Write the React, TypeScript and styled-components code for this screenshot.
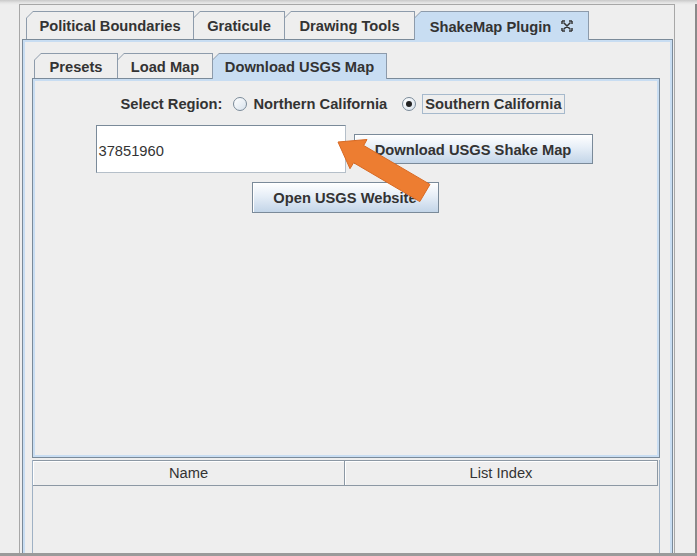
import React from "react";
import styled, { createGlobalStyle } from "styled-components";

const GlobalStyle = createGlobalStyle`
  html, body {
    margin: 0;
    padding: 0;
    background: #eeeeee;
  }
  * {
    box-sizing: border-box;
  }
`;

const FONT = `"Liberation Sans", Arial, sans-serif`;
const SIZE = "14.7px";
const EDGE = "#7a8a99";
const BLUE = "#c8ddf2";

const App: React.FC = () => {
  return (
    <>
      <GlobalStyle />
      <Screen>
        <OuterPanel>
          <TabRow $indent={4}>
            <Tab $w={168} $h={28}>
              <TabFace>Political Boundaries</TabFace>
            </Tab>
            <Tab $w={92} $h={28}>
              <TabFace>Graticule</TabFace>
            </Tab>
            <Tab $w={131} $h={28}>
              <TabFace>Drawing Tools</TabFace>
            </Tab>
            <Tab $w={175} $h={28} $selected>
              <TabFace $selected>
                ShakeMap Plugin
                <CloseIcon width="12" height="12" viewBox="0 0 12 12">
                  <path
                    d="M2.5 2.5 L9.5 9.5 M9.5 2.5 L2.5 9.5 M1 1 H4 M1 1 V4 M11 1 H8 M11 1 V4 M1 11 H4 M1 11 V8 M11 11 H8 M11 11 V8"
                    stroke="#333"
                    strokeWidth="1.5"
                    fill="none"
                  />
                </CloseIcon>
              </TabFace>
            </Tab>
          </TabRow>

          <OuterContent>
            <TabRow $indent={2}>
              <Tab $w={84} $h={25}>
                <TabFace>Presets</TabFace>
              </Tab>
              <Tab $w={96} $h={25}>
                <TabFace>Load Map</TabFace>
              </Tab>
              <Tab $w={175} $h={25} $selected>
                <TabFace $selected>Download USGS Map</TabFace>
              </Tab>
            </TabRow>

            <InnerPane>
              <FormRow>
                <Label>Select Region:</Label>
                <RadioItem>
                  <Radio />
                  <span>Northern California</span>
                </RadioItem>
                <RadioItem>
                  <Radio $on />
                  <Focused>Southern California</Focused>
                </RadioItem>
              </FormRow>

              <FormRow $top={11} $shift={4}>
                <TextField>37851960</TextField>
                <Button $w={239} $h={30}>
                  Download USGS Shake Map
                </Button>
              </FormRow>

              <FormRow $top={9} $shift={2}>
                <Button $w={187} $h={31}>
                  Open USGS Website
                </Button>
              </FormRow>
            </InnerPane>

            <ScrollPane>
              <TableHeader>
                <HeaderCell>Name</HeaderCell>
                <HeaderCell>List Index</HeaderCell>
              </TableHeader>
            </ScrollPane>
          </OuterContent>
        </OuterPanel>
        <RightStrip />

        <Arrow width="697" height="556" viewBox="0 0 697 556">
          <polygon
            points="338,142 367,139.5 363.7,145.5 430,184.4 419.8,201.6 353.6,162.7 350,168.7"
            fill="#ed7d31"
            stroke="#d86a24"
            strokeWidth="1"
            strokeLinejoin="round"
          />
        </Arrow>
      </Screen>
    </>
  );
};

export default App;

const Screen = styled.div`
  position: relative;
  width: 697px;
  height: 556px;
  display: flex;
  padding: 4px 0 0 19px;
  overflow: hidden;
  background: linear-gradient(#c9c9c9, #e6e6e6 3px, #eeeeee 5px);
  border-bottom: 3px solid #9a9a9a;
  font-family: ${FONT};
  color: #333333;
`;

const OuterPanel = styled.div`
  width: 656px;
  display: flex;
  flex-direction: column;
  padding: 6px 1px 0 2px;
  border: 1px solid #a7a7a7;
  border-bottom: none;
  background: #eeeeee;
`;

const RightStrip = styled.div`
  flex: 1;
  border-right: 2px solid #8a8a8a;
`;

const TabRow = styled.div<{ $indent: number }>`
  position: relative;
  z-index: 2;
  display: flex;
  align-items: flex-end;
  padding-left: ${(p) => p.$indent}px;
`;

const Tab = styled.div<{ $w: number; $h: number; $selected?: boolean }>`
  width: ${(p) => p.$w}px;
  height: ${(p) => (p.$selected ? p.$h + 1 : p.$h)}px;
  margin-right: -1px;
  margin-bottom: ${(p) => (p.$selected ? -1 : 0)}px;
  padding: 1px 1px 0 1px;
  background: #8d9bab;
  clip-path: polygon(0 7px, 7px 0, 100% 0, 100% 100%, 0 100%);
`;

const TabFace = styled.div<{ $selected?: boolean }>`
  height: 100%;
  display: flex;
  align-items: center;
  justify-content: center;
  padding-top: 1px;
  background: ${(p) => (p.$selected ? BLUE : "#eeeeee")};
  clip-path: polygon(0 6px, 6px 0, 100% 0, 100% 100%, 0 100%);
  font: bold ${SIZE} ${FONT};
  color: #333333;
  white-space: nowrap;
`;

const CloseIcon = styled.svg`
  margin-left: 10px;
  margin-bottom: 1px;
`;

const OuterContent = styled.div`
  flex: 1;
  min-height: 0;
  display: flex;
  flex-direction: column;
  padding: 13px 12px 0 9px;
  border: 1px solid ${EDGE};
  border-bottom: none;
  box-shadow: inset 2px 2px 0 ${BLUE}, inset -2px 0 0 ${BLUE};
`;

const InnerPane = styled.div`
  height: 380px;
  display: flex;
  flex-direction: column;
  align-items: center;
  padding-top: 15px;
  border: 1px solid ${EDGE};
  box-shadow: inset 0 0 0 2px ${BLUE};
`;

const FormRow = styled.div<{ $top?: number; $shift?: number }>`
  display: flex;
  align-items: center;
  justify-content: center;
  gap: 8px;
  margin-top: ${(p) => p.$top ?? 0}px;
  padding-right: ${(p) => p.$shift ?? 0}px;
`;

const Label = styled.span`
  font: bold ${SIZE} ${FONT};
  margin-right: 3px;
`;

const RadioItem = styled.label`
  display: flex;
  align-items: center;
  gap: 6px;
  margin-right: 7px;
  font: bold ${SIZE} ${FONT};
`;

const Radio = styled.span<{ $on?: boolean }>`
  position: relative;
  width: 14px;
  height: 14px;
  border-radius: 50%;
  border: 1px solid ${EDGE};
  background: linear-gradient(135deg, #ffffff, #d8e2ec);
  &::after {
    content: "";
    display: ${(p) => (p.$on ? "block" : "none")};
    position: absolute;
    left: 3px;
    top: 3px;
    width: 6px;
    height: 6px;
    border-radius: 50%;
    background: #222222;
  }
`;

const Focused = styled.span`
  border: 1px solid #a6b9cc;
  padding: 1px 2px;
`;

const TextField = styled.div`
  width: 250px;
  height: 48px;
  display: flex;
  align-items: center;
  padding: 3px 0 0 2px;
  background: #ffffff;
  border: 1px solid ${EDGE};
  border-right-color: #b5bfc9;
  border-bottom-color: #b5bfc9;
  font: ${SIZE} ${FONT};
  color: #333333;
`;

const Button = styled.button<{ $w: number; $h: number }>`
  width: ${(p) => p.$w}px;
  height: ${(p) => p.$h}px;
  padding: 1px 0 0;
  border: 1px solid ${EDGE};
  background: linear-gradient(#ffffff, #e6eef7 45%, #c3d5e8);
  box-shadow: inset 1px 1px 0 #ffffff;
  font: bold ${SIZE} ${FONT};
  color: #333333;
`;

const ScrollPane = styled.div`
  flex: 1;
  margin-top: 2px;
  border-left: 1px solid #9fb1c4;
  border-right: 1px solid #9fb1c4;
  background: #eeeeee;
`;

const TableHeader = styled.div`
  display: grid;
  grid-template-columns: 312px 1fr;
  border-top: 1px solid #8c98a4;
  margin-right: 1px;
`;

const HeaderCell = styled.div`
  height: 25px;
  display: flex;
  align-items: center;
  justify-content: center;
  border-right: 1px solid #8c98a4;
  border-bottom: 1px solid #8c98a4;
  box-shadow: inset 1px 1px 0 #ffffff;
  font: ${SIZE} ${FONT};
  color: #333333;
`;

const Arrow = styled.svg`
  position: absolute;
  left: 0;
  top: 0;
  pointer-events: none;
`;
